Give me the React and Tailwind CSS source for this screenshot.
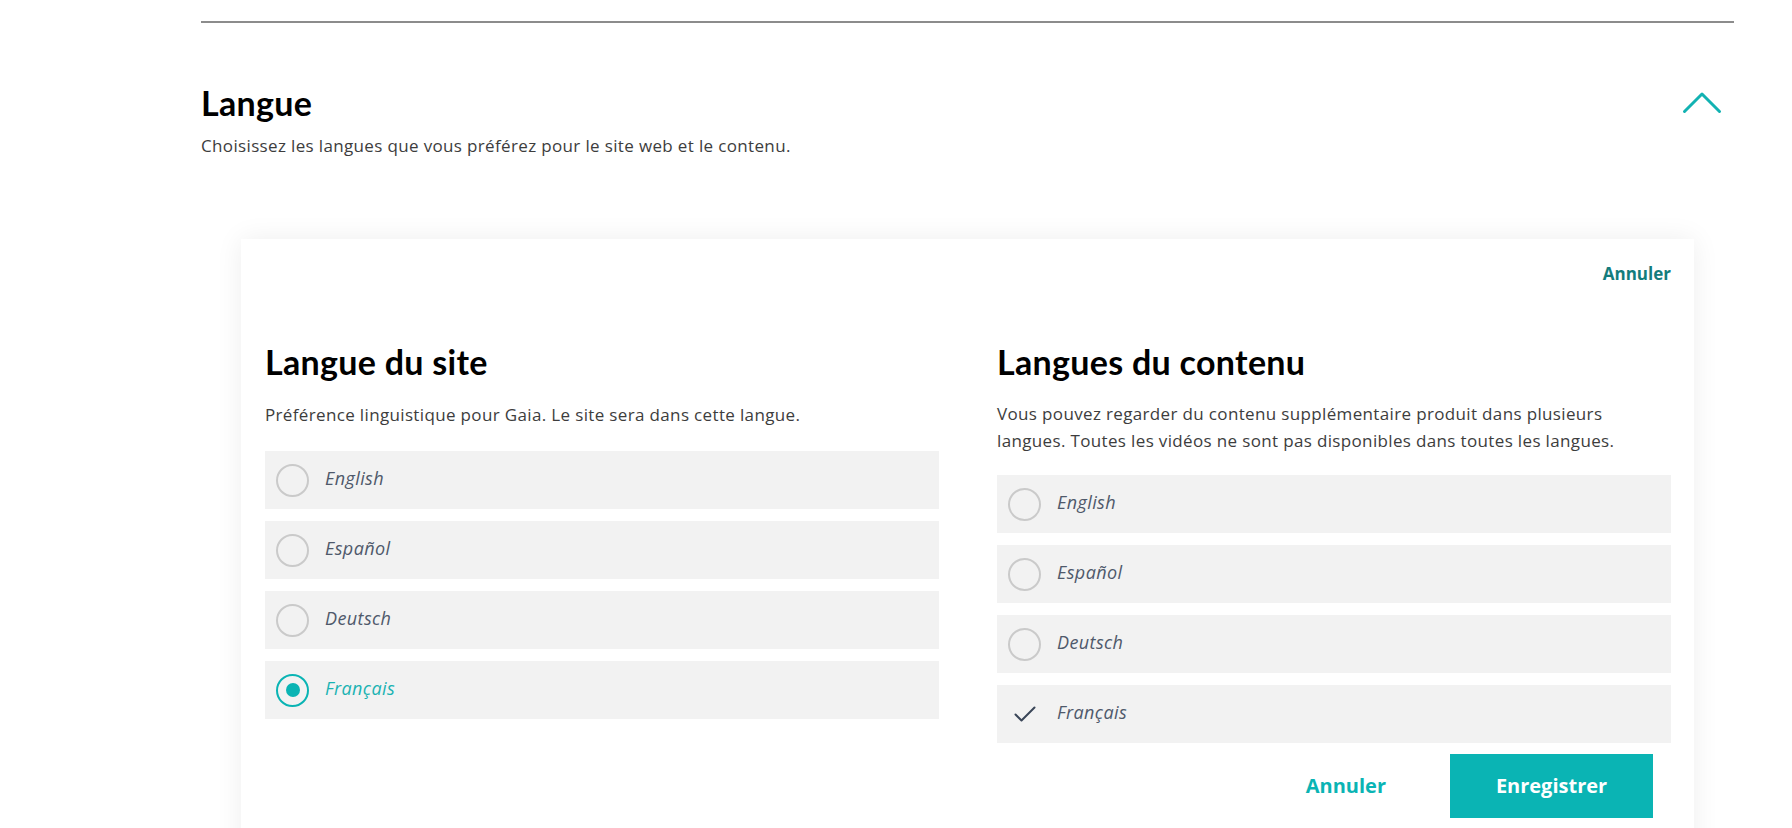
import React, { useState } from 'react';

const LANGS = ['English', 'Español', 'Deutsch', 'Français'];

const Radio = ({ checked }) => (
  <span
    className={`flex h-[33px] w-[33px] shrink-0 items-center justify-center rounded-full border-2 ${
      checked ? 'border-[#0ab4b4]' : 'border-[#cacaca]'
    }`}
  >
    {checked && <span className="h-[14px] w-[14px] rounded-full bg-[#0ab4b4]" />}
  </span>
);

const Check = ({ checked }) => (
  <span className="flex h-[33px] w-[33px] shrink-0 items-center justify-center">
    {checked ? (
      <svg width="22" height="16" viewBox="0 0 22 16" fill="none">
        <polyline points="1.5,8.5 7.5,14.5 20.5,1.5" stroke="#3a4658" strokeWidth="2" strokeLinecap="round" strokeLinejoin="round" />
      </svg>
    ) : (
      <span className="h-[33px] w-[33px] rounded-full border-2 border-[#cacaca]" />
    )}
  </span>
);

const Row = ({ label, active, onClick, children }) => (
  <button
    type="button"
    onClick={onClick}
    className="flex h-[58px] w-full items-center gap-4 bg-[#f2f2f2] pl-[11px] text-left"
  >
    {children}
    <span
      className={`-mt-[3px] text-[18px] italic tracking-[0.4px] ${active ? 'text-[#1ab3b3]' : 'text-[#4f596b]'}`}
    >
      {label}
    </span>
  </button>
);

export default function App() {
  const [siteLang, setSiteLang] = useState('Français');
  const [contentLangs, setContentLangs] = useState(['Français']);

  const toggleContent = (lang) => {
    setContentLangs((prev) => (prev.includes(lang) ? prev.filter((l) => l !== lang) : [...prev, lang]));
  };

  return (
    <div className="min-h-screen overflow-hidden bg-white font-['Open_Sans',sans-serif] text-black">
      <div className="ml-[201px] w-[1533px]">
        <div className="mt-[21px] h-[2px] bg-[#8c8c8c]" />

        {/* en-tête de la section */}
        <div className="mt-[60px] flex items-start justify-between">
          <div>
            <h1 className="font-['Lato',sans-serif] text-[34px] font-bold leading-[40px] tracking-[0.3px]">Langue</h1>
            <p className="mt-[11px] text-[17px] leading-6 tracking-[0.35px] text-[#3d3d3d]">
              Choisissez les langues que vous préférez pour le site web et le contenu.
            </p>
          </div>
          <button type="button" className="mr-[12px] mt-[8px]">
            <svg width="40" height="23" viewBox="0 0 40 23" fill="none">
              <polyline points="2.5,20.5 20,3 37.5,20.5" stroke="#12b2b2" strokeWidth="3" strokeLinecap="round" strokeLinejoin="round" />
            </svg>
          </button>
        </div>

        {/* carte des préférences */}
        <div className="ml-[40px] mt-[81px] w-[1453px] bg-white pb-[40px] pl-[24px] pr-[23px] pt-[23px] shadow-[0_0_26px_rgba(0,0,0,0.07)]">
          <div className="flex justify-end">
            <button type="button" className="text-[17px] font-bold leading-6 text-[#137c7c]">
              Annuler
            </button>
          </div>

          <div className="mt-[56px] grid grid-cols-2 gap-[58px]">
            <div>
              <h2 className="font-['Lato',sans-serif] text-[34px] font-bold leading-[40px] tracking-[0.3px]">Langue du site</h2>
              <p className="mt-[19px] text-[17px] leading-[27px] tracking-[0.35px] text-[#3d3d3d]">
                Préférence linguistique pour Gaia. Le site sera dans cette langue.
              </p>
              <div className="mt-[23px] flex flex-col gap-3">
                {LANGS.map((lang) => (
                  <Row key={lang} label={lang} active={siteLang === lang} onClick={() => setSiteLang(lang)}>
                    <Radio checked={siteLang === lang} />
                  </Row>
                ))}
              </div>
            </div>

            <div>
              <h2 className="font-['Lato',sans-serif] text-[34px] font-bold leading-[40px] tracking-[0.3px]">Langues du contenu</h2>
              <p className="mt-[18px] text-[17px] leading-[27px] tracking-[0.35px] text-[#3d3d3d]">
                Vous pouvez regarder du contenu supplémentaire produit dans plusieurs
                <br />
                langues. Toutes les vidéos ne sont pas disponibles dans toutes les langues.
              </p>
              <div className="mt-[21px] flex flex-col gap-3">
                {LANGS.map((lang) => (
                  <Row key={lang} label={lang} active={false} onClick={() => toggleContent(lang)}>
                    <Check checked={contentLangs.includes(lang)} />
                  </Row>
                ))}
              </div>
              <div className="mr-[18px] mt-[11px] flex items-center justify-end gap-16">
                <button type="button" className="text-[20px] font-bold text-[#0ab4b4]">
                  Annuler
                </button>
                <button type="button" className="h-[64px] w-[203px] bg-[#0ab4b4] text-[20px] font-bold text-white">
                  Enregistrer
                </button>
              </div>
            </div>
          </div>
        </div>
      </div>
    </div>
  );
}
